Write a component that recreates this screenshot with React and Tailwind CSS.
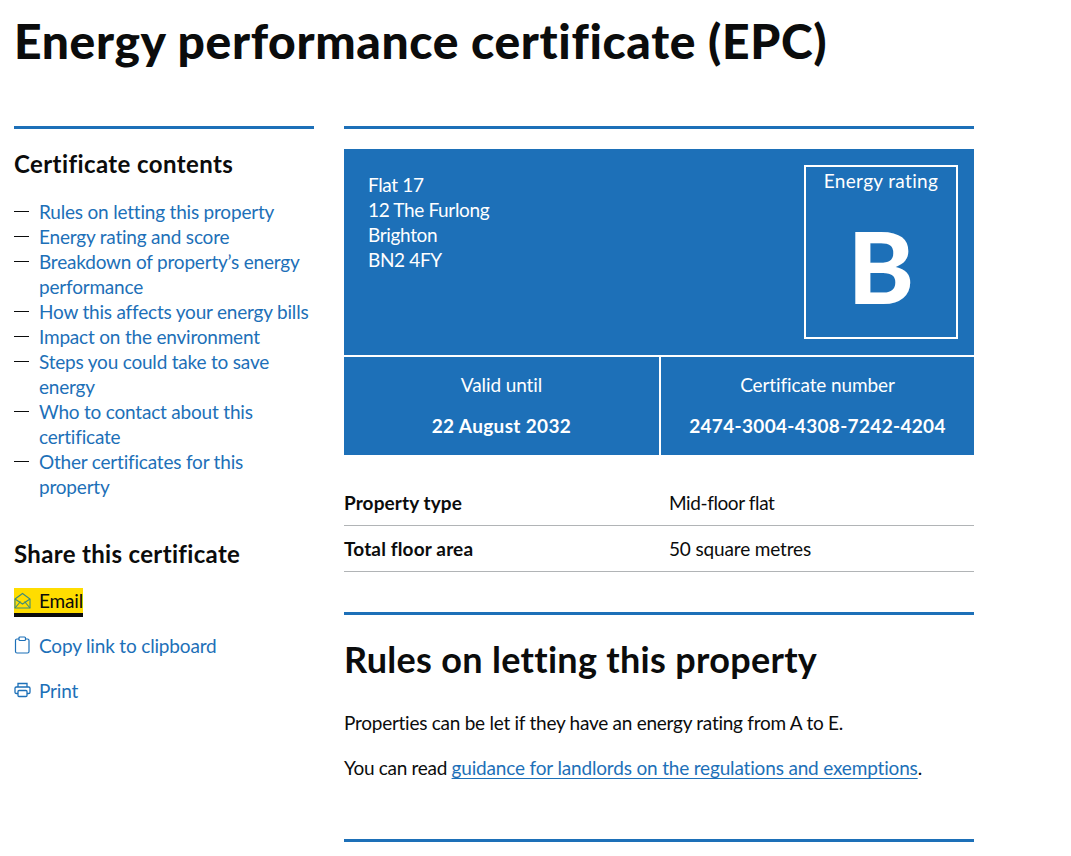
const links = [
  ["Rules on letting this property"],
  ["Energy rating and score"],
  ["Breakdown of property’s energy", "performance"],
  ["How this affects your energy bills"],
  ["Impact on the environment"],
  ["Steps you could take to save", "energy"],
  ["Who to contact about this", "certificate"],
  ["Other certificates for this", "property"],
];

function Contents() {
  return (
    <ul className="mt-[23px] text-[19px] leading-[25px] tracking-[-0.2px] text-[#1d70b8]">
      {links.map((l) => (
        <li key={l[0]} className="flex">
          <span className="w-[25px] shrink-0 text-[#0b0c0c] relative">
            <span className="absolute left-0 top-[12px] h-px w-[15px] bg-[#0b0c0c]" />
          </span>
          <span>
            {l.map((t) => (
              <span key={t} className="block whitespace-nowrap">{t}</span>
            ))}
          </span>
        </li>
      ))}
    </ul>
  );
}

function MailIcon() {
  return (
    <svg width="18" height="18" viewBox="0 0 18 18" fill="none" strokeWidth="1.1" className="shrink-0" stroke="#3f8a78">
      <path d="M1 7 8.500 1.500 16 7v9H1z" />
      <path d="M1 7l7.500 5L16 7M1 16l5.500-6.500M16 16l-5.500-6.500" />
    </svg>
  );
}

function ClipIcon() {
  return (
    <svg width="18" height="20" viewBox="0 0 18 20" fill="none" stroke="#1d70b8" strokeWidth="1.2">
      <path d="M5 3H3a1.500 1.500 0 0 0-1.500 1.500v11A1.500 1.500 0 0 0 3 17h10.500a1.500 1.500 0 0 0 1.500-1.500v-11A1.500 1.500 0 0 0 13.500 3h-2" />
      <rect x="5" y="1" width="6.500" height="3.500" rx="1" />
    </svg>
  );
}

function PrintIcon() {
  return (
    <svg width="18" height="18" viewBox="0 0 18 18" fill="none" stroke="#1d70b8" strokeWidth="1.300">
      <path d="M4 5V1.500h9V5" />
      <path d="M4 11.500H2.500A1.300 1.300 0 0 1 1 10.200V6.300A1.300 1.300 0 0 1 2.300 5h12.400A1.300 1.300 0 0 1 16 6.300v3.900a1.300 1.300 0 0 1-1.300 1.300H13" />
      <rect x="4" y="8.500" width="9" height="6" rx="1" />
    </svg>
  );
}

export default function App() {
  return (
    <div className="min-h-[856px] bg-white text-[#0b0c0c] overflow-hidden" style={{ fontFamily: 'Lato, sans-serif' }}>
      <div className="px-[14px]">
        <h1 className="text-[48px] leading-[50px] font-black tracking-[0.62px] pt-[16px] h-[126px] whitespace-nowrap">Energy performance certificate (EPC)</h1>
        <div className="flex gap-[30px] items-start">
          <aside className="w-[300px] shrink-0">
            <div className="border-t-[3px] border-[#1d70b8] pt-[22px]">
              <h2 className="text-[24px] leading-[25px] font-bold tracking-[0.4px]">Certificate contents</h2>
              <Contents />
              <h2 className="text-[24px] leading-[25px] font-bold tracking-[0.33px] mt-[42px]">Share this certificate</h2>
              <div className="mt-[22px] flex flex-col items-start gap-[20px] text-[19px] leading-[25px] tracking-[-0.17px] text-[#1d70b8]">
                <a className="flex items-center gap-[7px] bg-[#ffdd00] text-[#0b0c0c] shadow-[0_4px_0_#0b0c0c] h-[25px]"><MailIcon />Email</a>
                <a className="flex items-center gap-[7px]"><ClipIcon />Copy link to clipboard</a>
                <a className="flex items-center gap-[7px]"><PrintIcon />Print</a>
              </div>
            </div>
          </aside>
          <main className="w-[630px] shrink-0">
            <div className="border-t-[3px] border-[#1d70b8] pt-[20px]">
              <div className="bg-[#1d70b8] text-white">
                <div className="flex justify-between h-[208px] pl-[24px] pr-[16px] pt-[16px] border-b-2 border-white">
                  <div className="pt-[7px] text-[19px] leading-[25px] tracking-[-0.35px]">
                    <div>Flat 17</div><div>12 The Furlong</div><div>Brighton</div><div>BN2 4FY</div>
                  </div>
                  <div className="w-[154px] h-[174px] border-2 border-white text-center">
                    <div className="text-[19px] leading-[25px] tracking-[0.35px] pt-[1px]">Energy rating</div>
                    <div className="text-[100px] leading-[100px] font-black mt-[22px]">B</div>
                  </div>
                </div>
                <div className="flex h-[98px] text-center text-[19px] leading-[25px]">
                  <div className="w-[317px] border-r-2 border-white pt-[15px]">
                    <div className="tracking-[-0.1px]">Valid until</div>
                    <div className="font-bold mt-[16px] tracking-[0.35px]">22 August 2032</div>
                  </div>
                  <div className="flex-1 pt-[15px]">
                    <div className="tracking-[-0.1px]">Certificate number</div>
                    <div className="font-bold mt-[16px] tracking-[0.33px]">2474-3004-4308-7242-4204</div>
                  </div>
                </div>
              </div>
              <dl className="mt-[25px] text-[19px] leading-[25px]">
                <div className="flex h-[46px] pt-[10px] border-b border-[#b1b4b6]">
                  <dt className="w-[325px] font-bold tracking-[0.1px]">Property type</dt><dd className="tracking-[-0.4px]">Mid-floor flat</dd>
                </div>
                <div className="flex h-[46px] pt-[10px] border-b border-[#b1b4b6]">
                  <dt className="w-[325px] font-bold tracking-[0.15px]">Total floor area</dt><dd className="tracking-[-0.15px]">50 square metres</dd>
                </div>
              </dl>
              <div className="border-t-[3px] border-[#1d70b8] mt-[40px] pt-[24px]">
                <h2 className="text-[36px] leading-[40px] font-bold tracking-[0.3px]">Rules on letting this property</h2>
                <p className="text-[19px] leading-[25px] tracking-[-0.26px] mt-[31px]">Properties can be let if they have an energy rating from A to E.</p>
                <p className="text-[19px] leading-[25px] tracking-[-0.17px] mt-[20px]"><span className="tracking-[-0.3px]">You can read </span><a className="text-[#1d70b8] underline underline-offset-[3px] decoration-1">guidance for landlords on the regulations and exemptions</a>.</p>
              </div>
              <div className="border-t-[3px] border-[#1d70b8] mt-[59px]" />
            </div>
          </main>
        </div>
      </div>
    </div>
  );
}
